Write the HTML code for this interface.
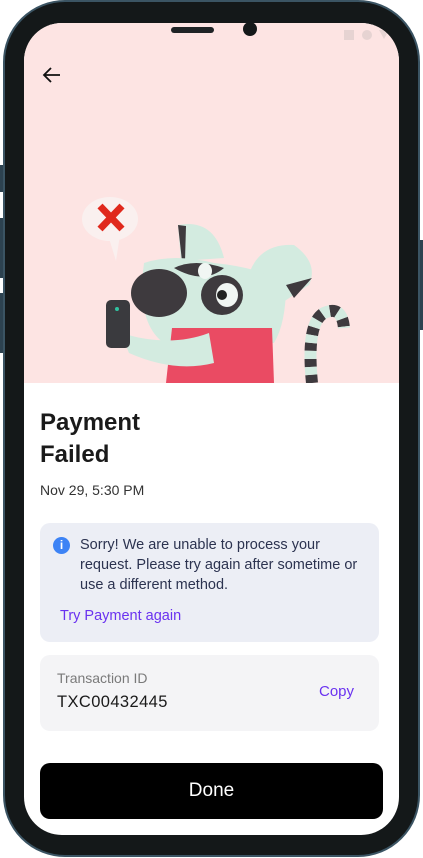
<!DOCTYPE html>
<html><head><meta charset="utf-8"><style>
*{margin:0;padding:0;box-sizing:border-box}
body{width:423px;height:858px;background:#fff;position:relative;overflow:hidden;font-family:"Liberation Sans",sans-serif}
.frame{position:absolute;left:3px;top:0;width:417px;height:857px;border-radius:62px;background:#141819;border:2px solid #3b5463}
.btn{position:absolute;background:#2d4250;width:4px}
.screen{position:absolute;left:24px;top:23px;width:375px;height:812px;border-radius:38px;background:#fff;overflow:hidden}
.pink{position:absolute;left:0;top:0;width:375px;height:360px;background:#fde4e3}
.abs{position:absolute}
</style></head><body>
<div class="btn" style="left:0;top:165px;height:27px"></div>
<div class="btn" style="left:0;top:218px;height:60px"></div>
<div class="btn" style="left:0;top:293px;height:60px"></div>
<div class="btn" style="left:419px;top:240px;height:90px"></div>
<div class="frame"></div>
<div class="screen">
 <div class="pink">
  <svg class="abs" style="left:0;top:0" width="375" height="360" viewBox="0 0 375 360">
   <rect x="320" y="7" width="10" height="10" fill="#e6d3d2"/>
   <circle cx="343" cy="12" r="5" fill="#e6d3d2"/>
   <path d="M355 7 L365 7 L360 16Z" fill="#e6d3d2"/>
   <path d="M36 52 H21 M27 45 L20 52 L27 59" stroke="#111" stroke-width="1.8" fill="none"/>
   <ellipse cx="86" cy="196" rx="28" ry="22" fill="#faf0ef"/>
   <path d="M84 212 L92 238 L96 212Z" fill="#faf0ef"/>
   <path d="M76 183 L98 206 M98 183 L76 206" stroke="#e0281c" stroke-width="7"/>
   <path d="M154 202 Q190 195 200 235 L157 238Z" fill="#d3ebe0"/>
   <path d="M154 202 L162 203 L161 238 L158 238Z" fill="#3e3a3e"/>
   <path d="M222 262 Q230 220 270 222 Q295 240 285 262 L250 285Z" fill="#d3ebe0"/>
   <path d="M262 262 L288 255 L270 275Z" fill="#3e3a3e"/>
   <path d="M120 240 Q150 230 190 240 Q240 245 262 262 Q262 300 250 320 L140 320 Q112 300 120 240Z" fill="#d3ebe0"/>
   <ellipse cx="135" cy="270" rx="28" ry="24" fill="#3e3a3e"/>
   <ellipse cx="198" cy="272" rx="21" ry="20" fill="#3e3a3e"/>
   <ellipse cx="203" cy="272" rx="11" ry="12" fill="#f1f6f3"/>
   <circle cx="198" cy="272" r="5" fill="#222"/>
   <path d="M150 245 Q170 235 200 245 Q180 262 150 245Z" fill="#3e3a3e"/>
   <ellipse cx="181" cy="248" rx="7" ry="8" fill="#f1f6f3"/>
   <path d="M148 305 L248 305 L250 360 L142 360Z" fill="#ea4b63"/>
   <path d="M97 310 Q145 325 185 310 L190 340 Q150 350 105 330Z" fill="#d3ebe0"/>
   <rect x="82" y="277" width="24" height="48" rx="5" fill="#3a3a3e"/>
   <circle cx="93" cy="286" r="2" fill="#30c2a0"/>
   <path d="M288 360 Q282 300 300 290 Q318 282 320 305" stroke="#3e3a3e" stroke-width="12" fill="none" stroke-dasharray="8 8"/>
   <path d="M288 360 Q282 300 300 290 Q318 282 320 305" stroke="#d3ebe0" stroke-width="12" fill="none" stroke-dasharray="8 8" stroke-dashoffset="8"/>
  </svg>
  <div class="abs" style="left:147px;top:4px;width:43px;height:6px;border-radius:3px;background:#1f2325"></div>
  <div class="abs" style="left:219px;top:-1px;width:14px;height:14px;border-radius:50%;background:#141819"></div>
 </div>
 <div class="abs" style="left:16px;top:384px;font-size:24px;font-weight:bold;line-height:32px;color:#1a1a1a">Payment<br>Failed</div>
 <div class="abs" style="left:16px;top:459px;font-size:14px;color:#333">Nov 29, 5:30 PM</div>
 <div class="abs" style="left:16px;top:500px;width:339px;height:119px;border-radius:10px;background:#eceef5">
  <div class="abs" style="left:13px;top:14px;width:17px;height:17px;border-radius:50%;background:#3d83f5;color:#fff;font-size:12px;font-weight:bold;text-align:center;line-height:17px">i</div>
  <div class="abs" style="left:40px;top:12px;width:292px;font-size:14.5px;line-height:20px;color:#2c3350">Sorry! We are unable to process your request. Please try again after sometime or use a different method.</div>
  <div class="abs" style="left:20px;top:85px;font-size:14.5px;color:#6a32f0">Try Payment again</div>
 </div>
 <div class="abs" style="left:16px;top:632px;width:339px;height:76px;border-radius:10px;background:#f4f4f6">
  <div class="abs" style="left:17px;top:15px;font-size:14px;color:#7a7a7a">Transaction ID</div>
  <div class="abs" style="left:17px;top:38px;font-size:16.5px;color:#1a1a1a;letter-spacing:.4px">TXC00432445</div>
  <div class="abs" style="left:279px;top:28px;font-size:15px;color:#6a32f0">Copy</div>
 </div>
 <div class="abs" style="left:16px;top:740px;width:343px;height:56px;border-radius:10px;background:#000;color:#fff;font-size:19px;text-align:center;line-height:56px">Done</div>
</div>
</body></html>
